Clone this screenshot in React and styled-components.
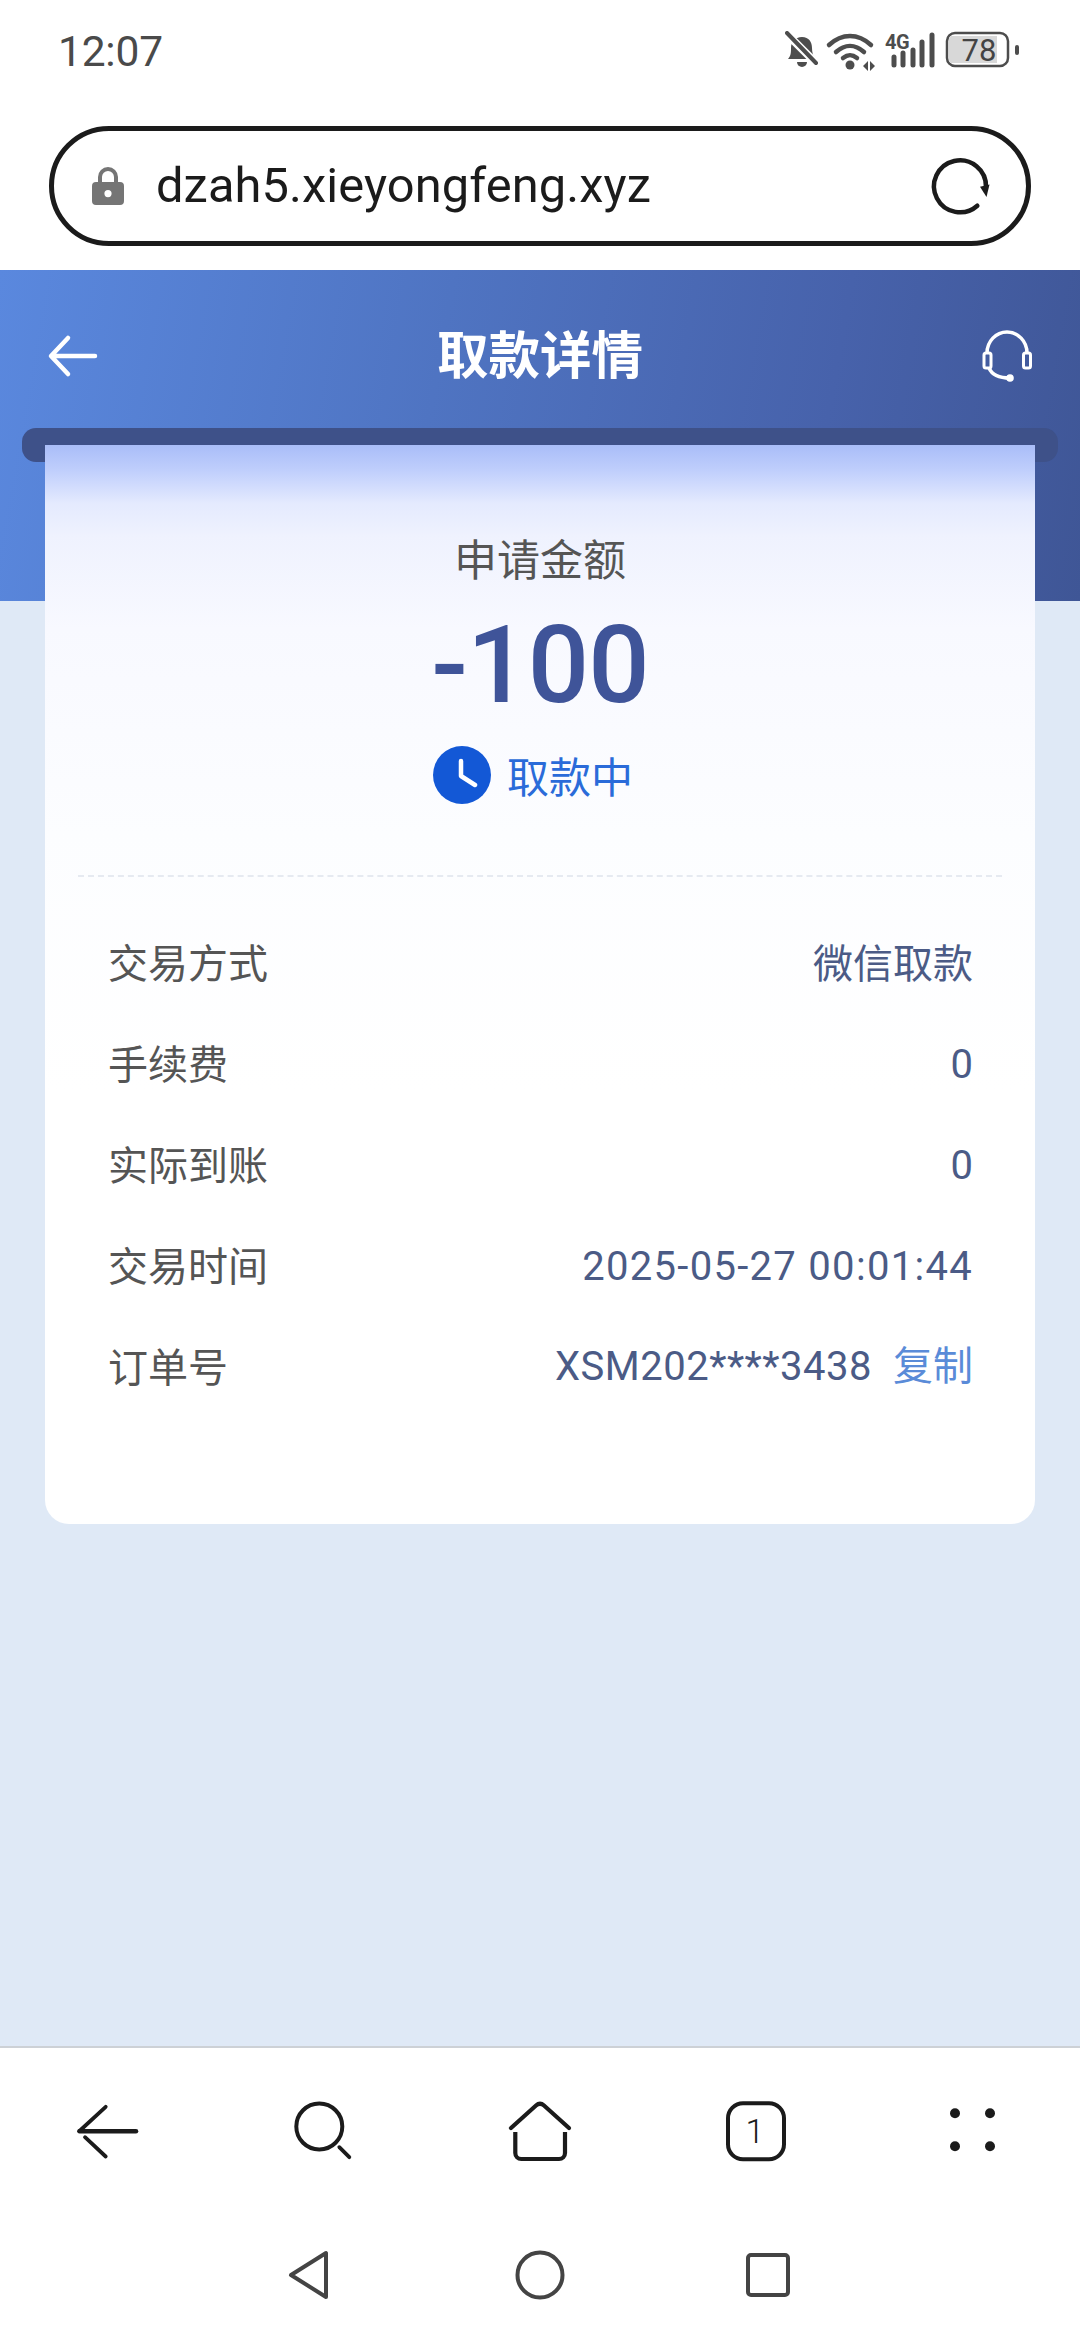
import React from 'react';
import styled, { createGlobalStyle } from 'styled-components';

const Global = createGlobalStyle`
  html, body { margin: 0; padding: 0; background: #fff; }
  body { font-family: Roboto, "Noto Sans CJK SC", sans-serif; }
  * { box-sizing: border-box; }
`;
const CJK = `"Noto Sans CJK SC", Roboto, sans-serif`;

const Page = styled.div`
  width: 1080px; height: 2340px; display: flex; flex-direction: column; overflow: hidden; background: #fff;
`;
const StatusBar = styled.div`
  height: 126px; flex: none; padding: 26px 59px 0 58px; display: flex; justify-content: space-between; align-items: flex-start;
`;
const Clock = styled.span`
  font-size: 42.5px; line-height: 52px; color: #4a4a4a; letter-spacing: -0.2px;
`;
const StatusIcons = styled.svg`
  display: block; margin-top: 5px;
`;
const UrlRow = styled.div`
  height: 144px; flex: none; padding: 0 49px;
`;
const UrlBar = styled.div`
  height: 120px; border: 5px solid #1b1b1b; border-radius: 60px; display: flex; align-items: center; padding: 0 33px 0 38px;
`;
const Url = styled.span`
  flex: 1; margin-left: 32px; font-size: 48.8px; line-height: 60px; color: #1b1b1b; letter-spacing: 0.1px;
`;
const Main = styled.main`
  flex: 1; background: #dfe9f6; display: flex; flex-direction: column;
`;
const Header = styled.header`
  height: 331px; flex: none; padding: 0 22px; display: flex; flex-direction: column;
  background: linear-gradient(100deg, #5a88de 0%, #4f74c2 40%, #4762ab 75%, #3f5696 100%);
`;
const TopBar = styled.div`
  height: 158px; flex: none; padding: 14px 24px 0 26px; display: flex; align-items: center; justify-content: space-between; position: relative;
`;
const Title = styled.h1`
  margin: 0; font: 700 51.5px/70px ${CJK}; color: #fff; position: absolute; left: 0; right: 0; top: 47px; text-align: center;
`;
const Slot = styled.div`
  height: 34px; flex: none; border-radius: 14px; background: #3e5189;
`;
const Card = styled.section`
  margin: -156px 45px 0; height: 1079px; flex: none; position: relative; border-radius: 0 0 24px 24px; padding-top: 84px;
  background: linear-gradient(180deg, #a9bdf8 0%, #bfcefc 2.3%, #e4eafe 5.4%, #eff2fe 8.5%, #f8f9ff 17%, #fcfdff 36%, #ffffff 60%);
`;
const AmountBlock = styled.div`
  display: flex; flex-direction: column; align-items: center;
`;
const AmountLabel = styled.div`
  font: 400 43px/56px ${CJK}; color: #555;
`;
const Amount = styled.div`
  margin-top: 21px; font: 500 108px/118px Roboto, sans-serif; color: #3f5499; letter-spacing: -0.8px;
`;
const Status = styled.div`
  margin: 22px 14px 0 0; display: flex; align-items: center; gap: 16px; font: 400 42px/58px ${CJK}; color: #2a6bd9;
`;
const Dashed = styled.div`
  margin: 71px 33px 0; border-top: 2px dashed #e6eaf1;
`;
const Rows = styled.div`
  margin-top: 54px; padding: 0 62px 0 63px; display: flex; flex-direction: column; gap: 41px;
`;
const Row = styled.div`
  height: 60px; display: flex; justify-content: space-between; align-items: center;
`;
const RowLabel = styled.span`
  font: 400 40px/60px ${CJK}; color: #555;
`;
const ValueWrap = styled.div`
  padding-top: ${p => p.$drop || '0'};
`;
const RowValue = styled.span`
  font-size: 40px; line-height: 60px; color: #4b5b86; font-family: ${p => (p.$cjk ? CJK : 'Roboto, sans-serif')};
  letter-spacing: ${p => p.$track || '0'};
`;
const Copy = styled.span`
  margin-left: 21px; font: 400 40px/60px ${CJK}; color: #5a8bd8;
`;
const Toolbar = styled.nav`
  height: 174px; flex: none; border-top: 2px solid #cdd1d6; display: flex; align-items: center; background: #fff;
`;
const ToolSlot = styled.div`
  flex: 1; display: flex; justify-content: center; margin-top: -3px;
`;
const SysNav = styled.nav`
  height: 120px; flex: none; padding: 0 0 10px 0; display: flex; justify-content: center; align-items: center; background: #fff;
`;
const SysSlot = styled.div`
  width: 228px; display: flex; justify-content: center;
`;
const IconSvg = styled.svg`
  display: block; flex: none; overflow: visible;
`;

const Lock = () => (
  <IconSvg width="32" height="38" viewBox="0 0 32 38">
    <path d="M8 17V10a8 8 0 0 1 16 0v7" fill="none" stroke="#757575" strokeWidth="4" />
    <path fillRule="evenodd" fill="#757575" d="M4 15h24a4 4 0 0 1 4 4v15a4 4 0 0 1-4 4H4a4 4 0 0 1-4-4V19a4 4 0 0 1 4-4zm12 8a3.6 3.6 0 1 0 0 7.2a3.6 3.6 0 0 0 0-7.200z" />
  </IconSvg>
);
const Reload = () => (
  <IconSvg width="60" height="60" viewBox="0 0 60 60">
    <path d="M53 31A26 26 0 1 0 44.300 49.700" fill="none" stroke="#1b1b1b" strokeWidth="4.500" strokeLinecap="round" />
    <path d="M47 30.700L56.500 28.500L53.500 41z" fill="#1b1b1b" />
  </IconSvg>
);
const StatusGlyphs = () => (
  <StatusIcons width="236" height="40" viewBox="0 0 236 40">
    <g fill="#4d4d4d">
      <path d="M3 28c3-3 3-7 3-11c0-6 4-11 11-11s10 5 10 11c0 4 1 8 3 11z" />
      <path d="M12 31h10a5 5 0 0 1-10 0z" />
    </g>
    <path d="M2 3l28 28" stroke="#fff" strokeWidth="8" />
    <path d="M2 2l29 30" stroke="#4d4d4d" strokeWidth="4" strokeLinecap="round" />
    <g fill="none" stroke="#4d4d4d" strokeWidth="4.500" strokeLinecap="round">
      <path d="M44 14c13-12 29-12 42 0" />
      <path d="M51 21c9-8 19-8 28 0" />
      <path d="M58 27c5-4 9-4 14 0" />
    </g>
    <circle cx="65" cy="34" r="4.500" fill="#4d4d4d" />
    <path d="M78 35l5-5v10zM90 35l-5-5v10z" fill="#4d4d4d" />
    <text x="100" y="18" fontFamily="Roboto, sans-serif" fontWeight="700" fontSize="20" letterSpacing="-0.5" fill="#4d4d4d">4G</text>
    <g stroke="#4d4d4d" strokeWidth="5" strokeLinecap="round">
      <path d="M109 26v8M118 22v12M128 19v15M137 11v23M147 4v30" />
    </g>
    <rect x="162" y="2" width="61" height="33" rx="8" fill="#fff" stroke="#4d4d4d" strokeWidth="2.500" />
    <path d="M166 5h46v27h-46a3 3 0 0 1-2-3v-21a3 3 0 0 1 2-3z" fill="#d8d8d8" />
    <rect x="230" y="14" width="4" height="10" rx="2" fill="#4d4d4d" />
    <text x="194" y="30" textAnchor="middle" fontFamily="Roboto, sans-serif" fontSize="31" fill="#444">78</text>
  </StatusIcons>
);
const BackWhite = () => (
  <IconSvg width="50" height="42" viewBox="0 0 50 42">
    <path d="M47 21H4M20 3L3 21l17 18" fill="none" stroke="#fff" strokeWidth="4.500" strokeLinecap="round" strokeLinejoin="round" />
  </IconSvg>
);
const Headset = () => (
  <IconSvg width="54" height="54" viewBox="0 0 54 54">
    <path d="M7 24A20 21 0 0 1 47 24" fill="none" stroke="#fff" strokeWidth="3.500" />
    <rect x="4" y="24" width="7" height="15" rx="2" fill="none" stroke="#fff" strokeWidth="3" />
    <rect x="43.500" y="24" width="7" height="15" rx="2" fill="none" stroke="#fff" strokeWidth="3" />
    <path d="M9 39C12 46 20 49 30 49" fill="none" stroke="#fff" strokeWidth="3.500" />
    <circle cx="30" cy="49" r="3.800" fill="#fff" />
  </IconSvg>
);
const ClockBadge = () => (
  <IconSvg width="58" height="58" viewBox="0 0 58 58">
    <circle cx="29" cy="29" r="29" fill="#1358d6" />
    <path d="M28 16v15l14 9" fill="none" stroke="#fff" strokeWidth="4.500" strokeLinecap="round" strokeLinejoin="round" transform="translate(0 -1)" />
  </IconSvg>
);
const dark = '#1b1b1b';
const ToolBack = () => (
  <IconSvg width="60" height="56" viewBox="0 0 60 56">
    <path d="M1.500 26L27.700 1.800M7 32.200L27.700 51.500" fill="none" stroke={dark} strokeWidth="3.800" strokeLinecap="round" />
    <path d="M1.500 26.200H58" stroke={dark} strokeWidth="4.600" strokeLinecap="round" />
  </IconSvg>
);
const ToolSearch = () => (
  <IconSvg width="58" height="60" viewBox="0 0 58 60">
    <circle cx="24.300" cy="23.500" r="23" fill="none" stroke={dark} strokeWidth="4" />
    <path d="M44.300 44.200L54.300 54.200" stroke={dark} strokeWidth="3.800" strokeLinecap="round" />
  </IconSvg>
);
const ToolHome = () => (
  <IconSvg width="64" height="62" viewBox="0 0 64 62">
    <path d="M3 26L28 3.500Q32 0 36 3.500L61 26" fill="none" stroke={dark} strokeWidth="4.200" strokeLinecap="round" />
    <path d="M7.300 30V51a6 6 0 0 0 6 6H51a6 6 0 0 0 6-6V30" fill="none" stroke={dark} strokeWidth="4.200" />
  </IconSvg>
);
const ToolTabs = () => (
  <IconSvg width="60" height="62" viewBox="0 0 60 62">
    <rect x="2" y="1.200" width="56" height="56" rx="15" fill="none" stroke={dark} strokeWidth="4" />
    <text x="29" y="40.500" textAnchor="middle" fontFamily="Roboto, sans-serif" fontWeight="300" fontSize="34" fill={dark}>1</text>
  </IconSvg>
);
const ToolDots = () => (
  <IconSvg width="46" height="44" viewBox="0 0 46 44" fill={dark}>
    <circle cx="6" cy="2.200" r="5" /><circle cx="41" cy="2.200" r="5" />
    <circle cx="6" cy="35.200" r="5" /><circle cx="41" cy="35.200" r="5" />
  </IconSvg>
);
const grey = '#444';
const SysBack = () => (
  <IconSvg width="42" height="50" viewBox="3 0 42 50">
    <path d="M38 3v44L3 25z" fill="none" stroke={grey} strokeWidth="4" strokeLinejoin="round" />
  </IconSvg>
);
const SysHome = () => (
  <IconSvg width="50" height="50" viewBox="0 0 50 50">
    <circle cx="25" cy="25" r="22.500" fill="none" stroke={grey} strokeWidth="4" />
  </IconSvg>
);
const SysRecent = () => (
  <IconSvg width="44" height="44" viewBox="0 0 44 44">
    <rect x="2" y="2" width="40" height="40" rx="3" fill="none" stroke={grey} strokeWidth="4" />
  </IconSvg>
);

const rows = [
  { label: '交易方式', value: '微信取款', cjk: true },
  { label: '手续费', value: '0', drop: '6px' },
  { label: '实际到账', value: '0', drop: '6px' },
  { label: '交易时间', value: '2025-05-27 00:01:44', track: '1.3px', drop: '6px' },
  { label: '订单号', value: 'XSM202****3438', track: '0.5px', copy: true },
];

export default function App() {
  return (
    <Page>
      <Global />
      <StatusBar>
        <Clock>12:07</Clock>
        <StatusGlyphs />
      </StatusBar>
      <UrlRow>
        <UrlBar>
          <Lock />
          <Url>dzah5.xieyongfeng.xyz</Url>
          <Reload />
        </UrlBar>
      </UrlRow>
      <Main>
        <Header>
          <TopBar>
            <BackWhite />
            <Title>取款详情</Title>
            <Headset />
          </TopBar>
          <Slot />
        </Header>
        <Card>
          <AmountBlock>
            <AmountLabel>申请金额</AmountLabel>
            <Amount>-100</Amount>
            <Status><ClockBadge />取款中</Status>
          </AmountBlock>
          <Dashed />
          <Rows>
            {rows.map(r => (
              <Row key={r.label}>
                <RowLabel>{r.label}</RowLabel>
                <ValueWrap $drop={r.drop}>
                  <RowValue $cjk={r.cjk} $track={r.track}>{r.value}</RowValue>
                  {r.copy && <Copy>复制</Copy>}
                </ValueWrap>
              </Row>
            ))}
          </Rows>
        </Card>
      </Main>
      <Toolbar>
        <ToolSlot><ToolBack /></ToolSlot>
        <ToolSlot><ToolSearch /></ToolSlot>
        <ToolSlot><ToolHome /></ToolSlot>
        <ToolSlot><ToolTabs /></ToolSlot>
        <ToolSlot><ToolDots /></ToolSlot>
      </Toolbar>
      <SysNav>
        <SysSlot><SysBack /></SysSlot>
        <SysSlot><SysHome /></SysSlot>
        <SysSlot><SysRecent /></SysSlot>
      </SysNav>
    </Page>
  );
}
